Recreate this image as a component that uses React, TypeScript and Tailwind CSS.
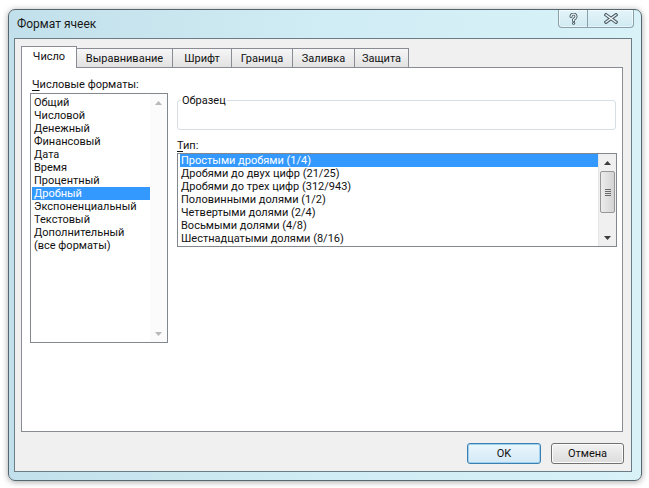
import React from "react";

const formats = [
  "Общий",
  "Числовой",
  "Денежный",
  "Финансовый",
  "Дата",
  "Время",
  "Процентный",
  "Дробный",
  "Экспоненциальный",
  "Текстовый",
  "Дополнительный",
  "(все форматы)",
];

const types = [
  "Простыми дробями (1/4)",
  "Дробями до двух цифр (21/25)",
  "Дробями до трех цифр (312/943)",
  "Половинными долями (1/2)",
  "Четвертыми долями (2/4)",
  "Восьмыми долями (4/8)",
  "Шестнадцатыми долями (8/16)",
];

const tabs: { label: string; w: string; active?: boolean }[] = [
  { label: "Число", w: "w-[56px]", active: true },
  { label: "Выравнивание", w: "w-[97px]" },
  { label: "Шрифт", w: "w-[60px]" },
  { label: "Граница", w: "w-[62px]" },
  { label: "Заливка", w: "w-[63px]" },
  { label: "Защита", w: "w-[55px]" },
];

function Arrow({ up, color }: { up?: boolean; color: string }) {
  return (
    <svg width="7" height="4" viewBox="0 0 7 4">
      {up ? (
        <polygon points="0,4 7,4 3.5,0" fill={color} />
      ) : (
        <polygon points="0,0 7,0 3.5,4" fill={color} />
      )}
    </svg>
  );
}

export default function App() {
  return (
    <div className="w-[649px] h-[488px] bg-white pt-[9px] pl-[8px] overflow-hidden font-['Roboto','Noto_Sans',sans-serif] text-[11px] leading-[13px] text-[#111]">
      <div className="w-[634px] h-[472px] rounded-[7px] border border-[#56666e] bg-gradient-to-r from-[#c2e0eb] via-[#d0ecf4] to-[#d8f2f8] flex flex-col shadow-[0_1px_6px_rgba(0,0,0,0.35)]">
        {/* Title bar */}
        <div className="h-[28px] flex items-start justify-between">
          <div className="pl-[8px] pt-[7px] text-[12px] leading-[14px] text-[#1a1a1a]">Формат ячеек</div>
          <div className="mr-[7px] flex h-[18px] rounded-b-[4px] border border-t-0 border-[#8aa0aa] bg-gradient-to-b from-[#e4f4f9] to-[#d0eaf2] shadow-[inset_0_0_0_1px_rgba(255,255,255,0.5)]">
            <div className="w-[29px] h-full flex items-center justify-center border-r border-[#8aa0aa]">
              <svg width="9" height="12" viewBox="0 0 9 12">
                <path d="M2 3.6 A2.5 2.4 0 1 1 6.2 5.2 L4.6 6.6 V7.8" fill="none" stroke="#4a5c66" strokeWidth="3" strokeLinecap="round" />
                <path d="M2 3.6 A2.5 2.4 0 1 1 6.2 5.2 L4.6 6.6 V7.8" fill="none" stroke="#f4fbfd" strokeWidth="1.2" strokeLinecap="round" />
                <circle cx="4.6" cy="10.3" r="1.5" fill="#4a5c66" />
                <circle cx="4.6" cy="10.3" r="0.6" fill="#f4fbfd" />
              </svg>
            </div>
            <div className="w-[45px] h-full flex items-center justify-center">
              <svg width="14" height="11" viewBox="0 0 14 11">
                <path d="M2 1.8 L12 9.2 M12 1.8 L2 9.2" stroke="#4a5c66" strokeWidth="3.4" strokeLinecap="square" />
                <path d="M2 1.8 L12 9.2 M12 1.8 L2 9.2" stroke="#f4fbfd" strokeWidth="1.3" strokeLinecap="square" />
              </svg>
            </div>
          </div>
        </div>

        {/* Client area */}
        <div className="ml-[5px] w-[618px] h-[434px] border border-[#6c7c84] bg-[#f0f0f0] flex flex-col">
          {/* Tabs */}
          <div className="pl-[6px] pt-[7px] flex items-end h-[28px]">
            {tabs.map((t) =>
              t.active ? (
                <div
                  key={t.label}
                  className={`${t.w} h-[22px] -mb-px relative z-10 bg-white border border-b-0 border-[#898c95] flex items-center justify-center pb-[2px]`}
                >
                  {t.label}
                </div>
              ) : (
                <div
                  key={t.label}
                  className={`${t.w} h-[19px] -ml-px first:ml-0 border border-b-0 border-[#898c95] bg-gradient-to-b from-[#f6f6f6] to-[#e2e2e2] flex items-center justify-center`}
                >
                  {t.label}
                </div>
              )
            )}
          </div>

          {/* Panel */}
          <div className="ml-[6px] w-[602px] h-[365px] bg-white border border-[#898c95] flex pl-[8px] pt-[10px]">
            {/* Left column */}
            <div className="w-[138px] flex flex-col">
              <div className="pl-[2px] h-[13px]">
                <span className="underline underline-offset-[2px]">Ч</span>исловые форматы:
              </div>
              <div className="mt-[2px] h-[250px] border border-[#828790] flex">
                <div className="flex-1 pl-[1px] pt-[2px]">
                  {formats.map((f) => (
                    <div
                      key={f}
                      className={`h-[13px] pl-[2px] whitespace-nowrap ${f === "Дробный" ? "bg-[#3399ff] text-white" : ""}`}
                    >
                      {f}
                    </div>
                  ))}
                </div>
                <div className="w-[17px] flex flex-col justify-between bg-[#fbfbfb]">
                  <div className="h-[17px] flex items-center justify-center">
                    <Arrow up color="#b8b8b8" />
                  </div>
                  <div className="h-[17px] flex items-center justify-center">
                    <Arrow color="#b8b8b8" />
                  </div>
                </div>
              </div>
            </div>

            {/* Right column */}
            <div className="ml-[9px] w-[440px] flex flex-col">
              <fieldset className="mt-[16px] w-[439px] h-[36px] border border-[#d5dfe5] rounded-[3px] pl-[3px]">
                <legend className="px-[1px] leading-[13px]">Образец</legend>
              </fieldset>
              <div className="mt-[9px] h-[13px]">
                <span className="underline underline-offset-[2px]">Т</span>ип:
              </div>
              <div className="mt-[1px] h-[94px] border border-[#828790] flex">
                <div className="flex-1 pl-[2px]">
                  {types.map((t, i) => (
                    <div
                      key={t}
                      className={`h-[13px] pl-[1px] whitespace-nowrap ${i === 0 ? "bg-[#3399ff] text-white" : ""}`}
                    >
                      {t}
                    </div>
                  ))}
                </div>
                <div className="w-[18px] flex flex-col bg-[#f0f0f0] border-l border-[#e6e6e6]">
                  <div className="h-[17px] flex items-center justify-center">
                    <Arrow up color="#3c3c3c" />
                  </div>
                  <div className="mx-[1px] h-[42px] rounded-[2px] border border-[#979797] bg-gradient-to-r from-[#ececec] to-[#d4d4d4] flex items-center justify-center">
                    <div className="w-[6px] flex flex-col gap-[1px]">
                      <div className="h-[1px] bg-[#6a6a6a]" />
                      <div className="h-[1px] bg-[#6a6a6a]" />
                      <div className="h-[1px] bg-[#6a6a6a]" />
                      <div className="h-[1px] bg-[#6a6a6a]" />
                    </div>
                  </div>
                  <div className="flex-1" />
                  <div className="h-[17px] flex items-center justify-center">
                    <Arrow color="#3c3c3c" />
                  </div>
                </div>
              </div>
            </div>
          </div>

          {/* Buttons */}
          <div className="mt-[11px] flex justify-end pr-[7px] gap-[10px]">
            <button className="w-[74px] h-[21px] rounded-[3px] border border-[#3c7fb1] bg-gradient-to-b from-[#eaf6fd] to-[#d3e9f7] shadow-[inset_0_0_0_1px_#9fd0ee] text-[11px] leading-[13px]">
              OK
            </button>
            <button className="w-[73px] h-[21px] rounded-[3px] border border-[#707070] bg-gradient-to-b from-[#f2f2f2] to-[#dcdcdc] shadow-[inset_0_0_0_1px_#fcfcfc] text-[11px] leading-[13px]">
              Отмена
            </button>
          </div>
        </div>
      </div>
    </div>
  );
}
